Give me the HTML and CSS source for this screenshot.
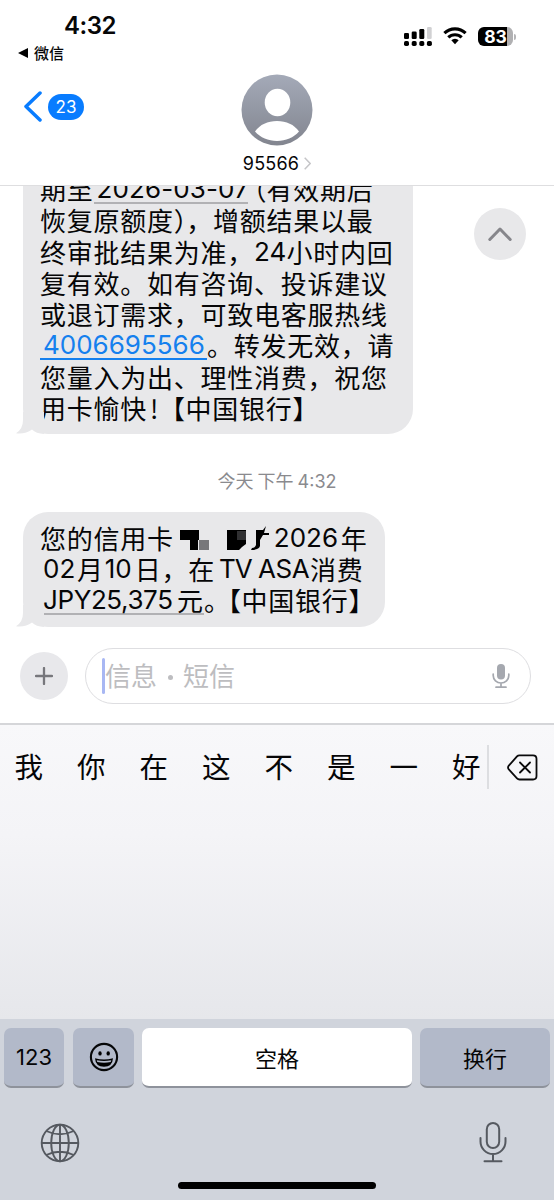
FILE: index.html
```html
<!DOCTYPE html>
<html lang="zh-CN">
<head>
<meta charset="utf-8">
<title>95566</title>
<link rel="stylesheet" href="styles.css">
</head>
<body>
<div class="phone">
  <header class="header">
    <div class="status">
      <div class="status-left">
        <div class="clock">4:32</div>
        <div class="return-app"><svg width="10" height="10" viewBox="0 0 10 10"><path d="M0 5 10 0v10z"/></svg><span>微信</span></div>
      </div>
      <div class="status-right">
        <svg width="28" height="20" viewBox="0 0 28 20">
          <rect x="0" y="6" width="5" height="6" rx="1.3"/><rect x="7.7" y="4.5" width="5" height="7.5" rx="1.3"/><rect x="15.3" y="2" width="5" height="10" rx="1.3"/><rect x="23" y="0" width="4.7" height="12" rx="1.3" fill="#d1d1d3"/>
          <rect x="0" y="14" width="5" height="5" rx="1.7"/><rect x="7.7" y="14" width="5" height="5" rx="1.7"/><rect x="15.3" y="14" width="5" height="5" rx="1.7"/><rect x="22.9" y="14" width="5" height="5" rx="1.7"/>
        </svg>
        <svg class="wifi" width="24" height="18" viewBox="0 0 24 18" fill="none" stroke="#000" stroke-width="3.1"><path d="M1.4 6.2a15.2 15.2 0 0 1 21.2 0M5.3 10.4a9.6 9.6 0 0 1 13.4 0"/><path d="M8.3 13.2a5.3 5.3 0 0 1 7.4 0L12 17.2z" fill="#000" stroke="none"/></svg>
        <div class="battery"><span>83</span></div><i class="battery-cap"></i>
      </div>
    </div>
    <div class="nav">
      <div class="back"><svg width="18" height="31" viewBox="0 0 18 31" fill="none" stroke="#087cff" stroke-width="3.5" stroke-linecap="round" stroke-linejoin="round"><path d="M16 2 2 15.5 16 29"/></svg><span class="unread">23</span></div>
      <div class="contact">
        <svg width="72" height="72" viewBox="0 0 72 72"><defs><linearGradient id="av" x1="0" y1="0" x2="0" y2="1"><stop offset="0" stop-color="#a4aab8"/><stop offset="1" stop-color="#82858f"/></linearGradient></defs><circle cx="36" cy="36" r="35.5" fill="url(#av)"/><ellipse cx="36.500" cy="28.5" rx="12.8" ry="13.7" fill="#fff"/><path d="M14 57.5C19 50.500 26.500 47 36 47s17 3.500 22 10.500C52.500 63.500 45 67 36 67s-16.500-3.500-22-9.500z" fill="#fff"/></svg>
        <div class="number">95566<svg width="7" height="13" viewBox="0 0 7 13" fill="none" stroke="#c5c5c8" stroke-width="1.500"><path d="m.7.7 5.500 5.800-5.500 5.800"/></svg></div>
      </div>
    </div>
  </header>

  <main class="thread">
    <button class="jump" aria-label="向上"><svg width="24" height="15" viewBox="0 0 24 15" fill="none" stroke="#86868b" stroke-width="3" stroke-linecap="round" stroke-linejoin="round"><path d="M1.800 12.500 12 2l10.200 10.500"/></svg></button>
    <div class="bubble first">
      <div class="line"><span>期至</span><span class="lat date mark">2026-03-07</span><span class="half open">（</span><span>有效期后</span></div>
      <div class="line"><span>恢复原额度</span><span class="half">）</span><span>，增额结果以最</span></div>
      <div class="line"><span>终审批结果为准，</span><span class="lat hours">24</span><span>小时内回</span></div>
      <div class="line"><span>复有效。如有咨询、投诉建议</span></div>
      <div class="line"><span>或退订需求，可致电客服热线</span></div>
      <div class="line"><span class="lat tel">4006695566</span><span>。转发无效，请</span></div>
      <div class="line"><span>您量入为出、理性消费，祝您</span></div>
      <div class="line"><span>用卡愉快</span><span class="bang">!</span><span class="half lead">【</span><span>中国银行</span><span class="half">】</span></div>
      <svg class="tail" width="28" height="22" viewBox="0 0 28 22"><path d="M7 0V8Q7 17 0 21.200 9 22.500 16 17.500 20 21.500 28 22V0z"/></svg>
    </div>
    <div class="stamp">今天 下午<span>4:32</span></div>
    <div class="bubble second">
      <div class="line"><span>您的信用卡</span>
        <svg class="mosaic" width="94" height="24" viewBox="0 0 94 24"><path d="M0 4h19v10h-1v10H10V14H0z"/><path fill="#77777a" d="M19 14h10v10H19z"/><path d="M47 4h19v14l-4 3-3 3H47z"/><path fill="#303032" d="M57 5h9v9h-9z"/><path d="M76 4h7l3-4-2 7h5v2h-6l-3 5v6q-1 4-9 4l1-2q3 0 4-3z"/></svg>
        <span class="lat year">2026</span><span>年</span></div>
      <div class="line"><span class="lat month">02</span><span>月</span><span class="lat day">10</span><span>日，在</span><span class="lat tv">TV</span><span class="lat asa">ASA</span><span>消费</span></div>
      <div class="line"><span class="mark amount"><span class="lat jpy">JPY25,375</span>元</span><span class="half stop">。</span><span class="half lead">【</span><span>中国银行</span><span class="half">】</span></div>
      <svg class="tail" width="28" height="22" viewBox="0 0 28 22"><path d="M7 0V8Q7 17 0 21.200 9 22.500 16 17.500 20 21.500 28 22V0z"/></svg>
    </div>
  </main>

  <div class="composer">
    <div class="plus"><svg width="18" height="18" viewBox="0 0 18 18" stroke="#77777c" stroke-width="2.300" stroke-linecap="round"><path d="M9 1v16M1 9h16"/></svg></div>
    <div class="field"><i class="caret"></i><span class="hint">信息</span><i class="dot"></i><span class="hint">短信</span>
      <svg width="18" height="26" viewBox="0 0 18 26" fill="none" stroke="#a5a8af" stroke-width="1.700" stroke-linecap="round"><rect x="5" y="1" width="8" height="15.500" rx="4" fill="#a5a8af" stroke="none"/><path d="M1.200 11v1.500a7.800 7.500 0 0 0 15.600 0V11M9 20v4M4 24.200h10"/></svg>
    </div>
  </div>

  <section class="keyboard">
    <div class="candidates"><span>我</span><span>你</span><span>在</span><span>这</span><span>不</span><span>是</span><span>一</span><span class="last">好</span>
      <div class="delete"><svg width="31" height="27" viewBox="0 0 31 27" fill="none" stroke="#0a0a0b" stroke-width="1.800" stroke-linecap="round" stroke-linejoin="round"><path d="M12.500 1.300H26Q29.500 1.300 29.500 4.800V22Q29.500 25.500 26 25.500H12.500Q11 25.500 10 24.400L1.800 15.300Q.3 13.500 1.800 11.700L10 2.400Q11 1.300 12.500 1.300z"/><path d="m13 8.500 10 10m0-10-10 10"/></svg></div>
    </div>
    <div class="keys">
      <div class="key num">123</div>
      <div class="key emoji"><svg width="30" height="30" viewBox="0 0 30 30"><circle cx="15" cy="15" r="13.100" fill="none" stroke="#060708" stroke-width="2.100"/><ellipse cx="11" cy="11.400" rx="1.700" ry="2.200"/><ellipse cx="19.200" cy="11.400" rx="1.700" ry="2.200"/><path d="M6 16.200q9 2.600 18 0-.6 8.600-9 8.600T6 16.200z"/><path d="M7.700 18.200q7.300 1.600 14.600 0l-.6 1.700q-6.700 1.500-13.400 0z" fill="#b2b9c9"/></svg></div>
      <div class="key space">空格</div>
      <div class="key enter">换行</div>
    </div>
    <div class="tools">
      <svg class="globe" width="40" height="40" viewBox="0 0 40 40" fill="none" stroke="#555960" stroke-width="1.900"><circle cx="20" cy="20" r="18.300"/><ellipse cx="20" cy="20" rx="8.800" ry="18.300"/><path d="M20 1.700v36.600M1.700 20h36.600M6.200 8q13.800 6.500 27.600 0M6.200 32q13.800-6.500 27.600 0"/></svg>
      <svg width="28" height="42" viewBox="0 0 28 42" fill="none" stroke="#555960" stroke-width="2" stroke-linecap="round"><rect x="7.800" y="2" width="12.400" height="25" rx="6.200"/><path d="M1.500 17v3.500a12.500 12.500 0 0 0 25 0V17M14 33v7M5.500 40.300h17"/></svg>
    </div>
    <div class="home"></div>
  </section>
</div>
</body>
</html>
```
FILE: styles.css
```css
* { box-sizing: border-box; }
body { margin: 0; background: #fff; color: #060607; font-family: Inter, "Noto Sans CJK SC", sans-serif; }
svg { display: block; flex: none; }
.phone { width: 554px; height: 1200px; display: flex; flex-direction: column; overflow: hidden; }
.header { height: 186px; flex: none; border-bottom: 1.500px solid #dedee0; }
.status { height: 74px; display: flex; justify-content: space-between; padding: 11px 38px 0 18px; }
.clock { margin-left: 46px; height: 30px; font: 600 24px/30px Inter, sans-serif; letter-spacing: -.5px; }
.return-app { display: flex; align-items: center; gap: 6px; margin-top: 1px; height: 22px; font: 500 15px/22px "Noto Sans CJK SC", sans-serif; }
.status-right { display: flex; align-items: flex-start; padding-top: 16px; }
.wifi { margin: 0 11px 0 11px; }
.battery { width: 35px; height: 19px; border-radius: 6px; background: linear-gradient(90deg, #000 83%, #b0b0b2 83%); color: #fff; font: 700 17.500px/19px Inter, sans-serif; text-align: center; }
.battery-cap { width: 2px; height: 6px; margin: 7px 0 0 1px; border-radius: 0 2px 2px 0; background: #b5b5b7; }
.nav { display: grid; grid-template-columns: 200px 154px 200px; }
.back { display: flex; align-items: center; gap: 6px; height: 31px; margin: 17px 0 0 24px; }
.unread { width: 36px; height: 26px; border-radius: 13px; background: #087cff; color: #fff; font-size: 17px; line-height: 26px; text-align: center; letter-spacing: 0; }
.contact { display: flex; flex-direction: column; align-items: center; }
.number { display: flex; align-items: center; gap: 5px; margin: 6px 0 0 0; font-size: 18px; line-height: 23px; letter-spacing: .2px; }
.thread { height: 454px; flex: none; position: relative; overflow: hidden; padding-left: 23px; }
.jump { position: absolute; right: 28px; top: 22px; width: 52px; height: 52px; border: 0; border-radius: 50%; background: #e8e8ea; display: flex; align-items: center; justify-content: center; padding: 0; }
.bubble { position: relative; background: #e8e8ea; border-radius: 25px; padding-left: 17px; }
.first { width: 390px; height: 248px; padding-top: 1px; border-top-left-radius: 0; border-top-right-radius: 0; }
.first .line:first-child { margin-top: -14px; }
.second { width: 362px; height: 115px; padding-top: 9.500px; }
.line { display: flex; height: 31.25px; font: 26px/31.25px "Noto Sans CJK SC", sans-serif; letter-spacing: .76px; white-space: nowrap; }
.lat { font-family: Inter, sans-serif; letter-spacing: 0; padding-left: 3px; }
.mark { border-bottom: 2px solid #b1b1b4; height: 31px; }
.date { width: 154px; letter-spacing: .1px; }
.half { width: 12.500px; letter-spacing: 0; font-feature-settings: "halt"; }
.open { width: 13px; margin-left: 6px; }
.bang { width: 12px; padding-left: 3px; }
.lead { margin-left: 13px; width: 13.500px; }
.stop { width: 11px; }
.hours { width: 32.500px; padding-left: 0; }
.tel { width: 167px; height: 30.500px; border-bottom: 2px solid #1580ee; color: #1580ee; }
.tail { position: absolute; left: -7px; bottom: 0; fill: #e8e8ea; }
.stamp { height: 78px; padding: 35px 23px 0 0; text-align: center; color: #8a8a8e; font: 18px/22px "Noto Sans CJK SC", sans-serif; }
.stamp span { font-family: Inter, sans-serif; margin-left: 4px; }
.mosaic { margin: 4px 0 0 6px; }
.year { width: 67px; padding-left: 0; }
.month { width: 37px; }
.day { width: 31px; padding-left: 1px; }
.tv { width: 41px; padding-left: 4px; letter-spacing: -1px; }
.asa { width: 54px; padding-left: 2px; letter-spacing: -.5px; }
.amount { display: flex; width: 164px; }
.jpy { width: 137px; letter-spacing: -.4px; }
.composer { height: 83px; flex: none; display: flex; gap: 17px; padding: 8px 23px 0 20px; }
.plus { width: 48px; height: 48px; margin-top: 4px; border-radius: 50%; background: #e8e8eb; display: flex; align-items: center; justify-content: center; }
.field { width: 446px; height: 56px; border: 1.500px solid #dedee1; border-radius: 28px; display: flex; align-items: center; padding: 0 20px 0 16px; }
.caret { width: 3px; height: 36px; border-radius: 2px; background: #a8b7f3; }
.hint { color: #bdbdc0; font: 26px/36px "Noto Sans CJK SC", sans-serif; margin-top: -2px; }
.dot { width: 5px; height: 5px; margin: 3px 10px 0 11px; border-radius: 50%; background: #bdbdc0; }
.field svg { margin-left: auto; }
.keyboard { height: 477px; flex: none; border-top: 2px solid #d5d6d9; background: linear-gradient(#f8f8fa 0, #f4f4f7 110px, #e6e7eb 294px, #d0d4dc 294px); }
.candidates { height: 295px; display: flex; align-items: flex-start; padding: 20px 0 0 0; font: 28.500px/42px "Noto Sans CJK SC", sans-serif; }
.candidates > span { width: 62.500px; flex: none; text-align: center; }
.candidates > span:first-child { margin-left: -2.500px; }
.candidates > .last { width: 51.500px; padding-left: 17px; text-align: left; }
.delete { width: 67px; height: 44px; border-left: 2px solid #dddee1; padding: 9px 0 0 18px; }
.keys { display: flex; padding: 8px 4px 0 4px; }
.key { height: 60px; display: flex; align-items: center; justify-content: center; border-radius: 7px; border-bottom: 2px solid #8e929b; background: #b2b9c9; font: 22px/30px "Noto Sans CJK SC", sans-serif; }
.num { width: 60px; font: 22px/30px Inter, sans-serif; margin-right: 9px; }
.emoji { width: 61px; margin-right: 8px; }
.space { width: 270px; margin-right: 8px; background: #fff; }
.enter { width: 130px; }
.tools { height: 94px; display: flex; justify-content: space-between; padding: 33px 47px 0 40px; }
.globe { margin-top: 2px; }
.home { width: 198px; height: 7px; margin: 0 auto; border-radius: 4px; background: #000; }
```
